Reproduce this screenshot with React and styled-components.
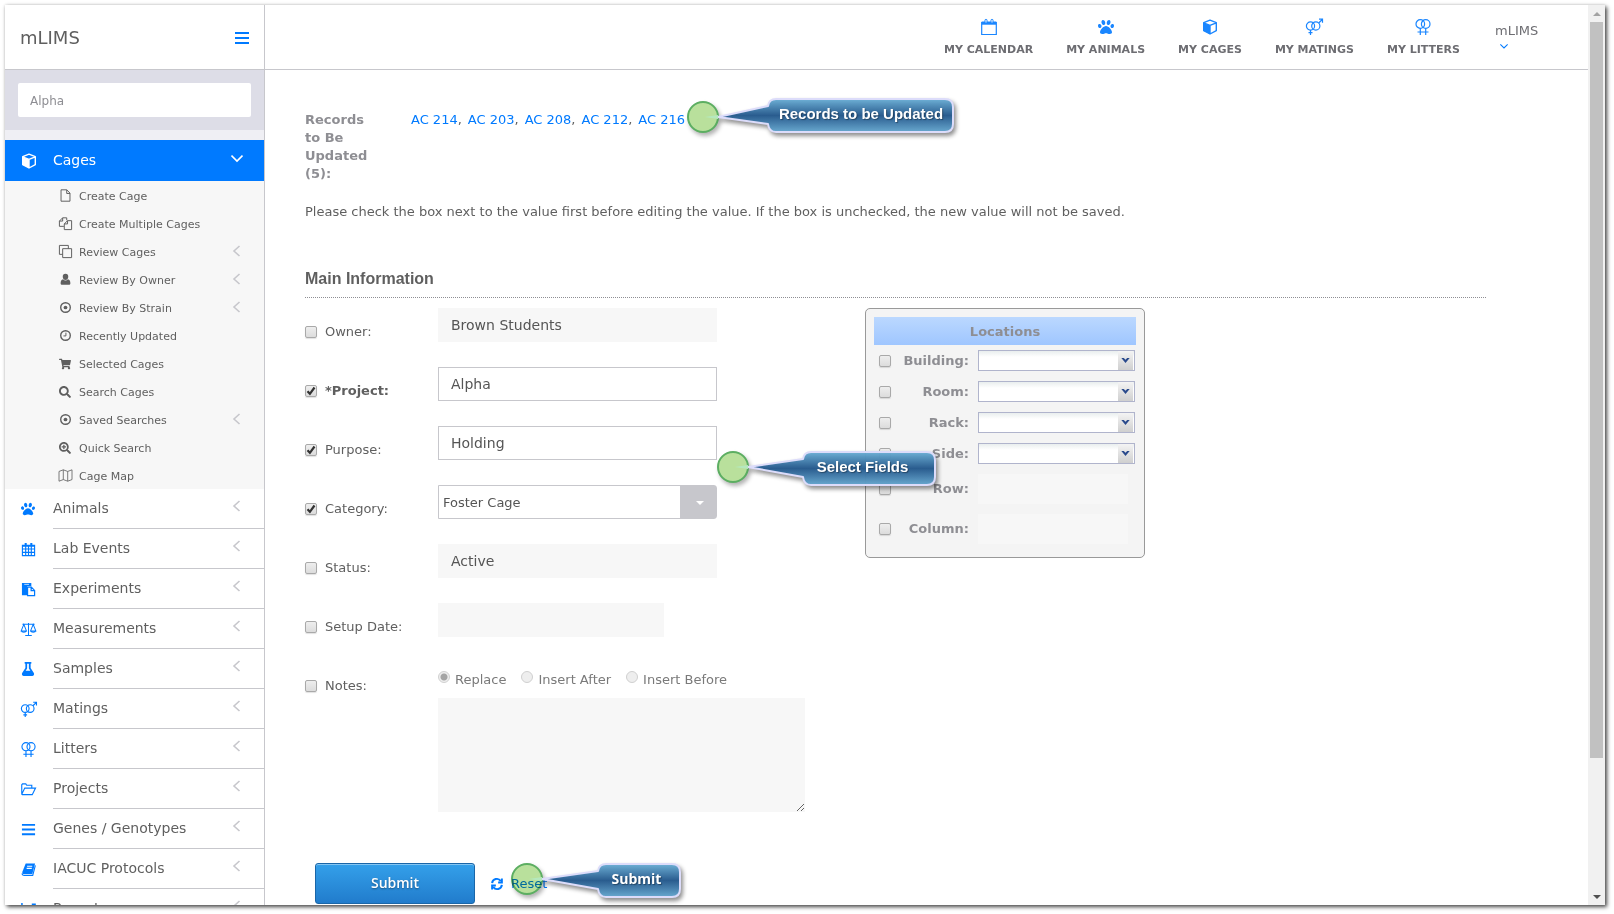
import React from "react";
import styled, { createGlobalStyle, css } from "styled-components";
import { FaPaw, FaShoppingCart, FaSearch, FaSearchPlus, FaFlask } from "react-icons/fa";

const blue = "#007aff";
const line = "#c7c7cc";
const muted = "#8e8e93";
const ink = "#5f5f5f";
const sans = `Verdana, "DejaVu Sans", sans-serif`;

const GlobalStyle = createGlobalStyle`
  *, *::before, *::after { box-sizing: border-box; }
  body { margin: 0; background: #fff; color: ${ink}; font: 13px/18px ${sans}; }
  a { color: ${blue}; text-decoration: none; }
  button, input, select, textarea { font-family: inherit; margin: 0; }
`;

/* ---------- icons ---------- */

const Glyph = styled.svg.attrs({ viewBox: "0 0 16 16", "aria-hidden": true })`
  width: ${(p) => p.$size || 16}px;
  height: ${(p) => p.$size || 16}px;
  flex: none;
  display: block;
  fill: none;
  stroke: currentColor;
  stroke-width: 1.2;
  overflow: visible;
`;

const icons = {
  cube: (
    <>
      <path d="M8 1.200l6.300 2.500v8L8 15 1.700 11.700v-8zM1.700 3.900L8 6.400l6.300-2.500M8 6.400V15" strokeLinejoin="round" strokeWidth="1.400" />
      <path d="M1.700 3.900L8 6.400V15l-6.300-3.300z" fill="currentColor" stroke="none" />
    </>
  ),
  file: <path d="M2.500 1h7l4 4v10h-11zM9.500 1v4.500h4" />,
  files: <path d="M6 11.500H.5V5L4.500 1h5v3M4.500 1v4h-4M6.500 15.500V8.500L10.500 4.500h5v11zM10.500 4.500v4h-4" />,
  clone: <path d="M4.500 11.500H.5v-11h11v4M4.500 4.500h11v11h-11z" />,
  user: <path fill="currentColor" stroke="none" d="M8 1a3.500 3.500 0 0 1 3.400 3.600C11.400 6.700 10 8.500 8 8.500S4.600 6.700 4.600 4.600A3.500 3.500 0 0 1 8 1zM5 7.800c1.800 2 4.200 2 6 0 2 .4 3 2.300 3 4.800 0 1.300-.7 2-1.900 2H3.900C2.700 14.600 2 13.900 2 12.600c0-2.500 1-4.400 3-4.800z" />,
  target: (
    <>
      <circle cx="8" cy="8" r="5.900" strokeWidth="1.700" />
      <circle cx="8" cy="8" r="2.300" fill="currentColor" stroke="none" />
    </>
  ),
  clock: (
    <>
      <circle cx="8" cy="8" r="5.900" strokeWidth="1.700" />
      <path d="M8.500 4.500v4H5.500" />
    </>
  ),
  map: <path strokeWidth="1" d="M0 3l5.300-2 5.400 2L16 1v12l-5.300 2-5.400-2L0 15zM5.300 1v12M10.700 3v12" />,
  calendar: (
    <path d="M1.500 4h13M1.500 3.500v11h13v-11zM1.500 7.500h13M1.500 11h13M5 5v9.500M8 5v9.500M11 5v9.500M2 4.500h12M4.500 1v3M5.500 1v3M10.500 1v3M11.500 1v3" strokeWidth="1.200" />
  ),
  calendarOpen: (
    <>
      <path d="M.7 3.500h14.600v12H.7z" />
      <path d="M.7 2.500h14.600v3.200H.7z" fill="currentColor" stroke="none" />
      <path d="M4 4V1.300q0-1 1-1t1 1V4zM10 4V1.300q0-1 1-1t1 1V4z" fill="#fff" strokeWidth="1" />
    </>
  ),
  paste: (
    <>
      <path d="M1 1h10v3.500H6.500V14H1z" fill="currentColor" stroke="none" />
      <path d="M3.500 2.500h5" stroke="#fff" strokeWidth=".8" />
      <path d="M7 5.500h4l3.500 3.500v5.500H7zM10.800 5.500v3.700h3.700" fill="#fff" strokeWidth="1.300" />
    </>
  ),
  scale: <path d="M8 1v13M4.500 14.500h7M1.500 2.500h13M3 2.500L.2 9.500h5.600zM13 2.500l-2.800 7h5.600zM.2 9.500c.6 2 5 2 5.600 0M10.200 9.500c.6 2 5 2 5.600 0" strokeWidth="1.100" />,
  mating: (
    <>
      <circle cx="4.500" cy="7" r="4.100" />
      <circle cx="9.800" cy="7" r="4.100" />
      <path d="M4.500 11v5M2.500 13.700h4M12.700 4L16.500.3M13 .2h3.500v3.500" />
    </>
  ),
  litter: (
    <>
      <circle cx="5.300" cy="5" r="4.300" />
      <circle cx="10.700" cy="5" r="4.300" />
      <path d="M5.300 9.300V16M10.700 9.300V16M2.500 13h11" />
    </>
  ),
  folder: <path d="M.8 12.500V3l.8-1h3.500l1 1.500H11.500V6M.8 13L4 6.500h11.500L12 13.500H1.500z" />,
  bars: <path d="M1 3h14M1 8h14M1 13h14" strokeWidth="2" />,
  book: (
    <>
      <path d="M5 1.500h10L12 13H3.500C1.800 13 1 12 1.500 10.500z" fill="currentColor" stroke="none" />
      <path d="M6.500 4.500h5.500M6 6.800h5.500" stroke="#fff" />
      <path d="M15.300 3.500l-2.800 10.900H3.500C2 14.400 1 13.500 1.300 12" />
    </>
  ),
  chart: <path d="M1 1v13h15M3 11l4-5 3 3 5-6M11.500 2.500H15v3.500" strokeWidth="1.600" />,
  refresh: (
    <path d="M1.500 6.800A6.300 6.300 0 0 1 13 4M14.500 .8v5.200H9.500M14.500 9.200A6.300 6.300 0 0 1 3 12M1.500 15.200V10h5" strokeWidth="2.600" />
  ),
};

const packaged = { paw: FaPaw, cart: FaShoppingCart, search: FaSearch, zoom: FaSearchPlus, flask: FaFlask };

function Icon({ name, size = 16 }) {
  const Packaged = packaged[name];
  return Packaged ? <Packaged size={size} aria-hidden /> : <Glyph $size={size}>{icons[name]}</Glyph>;
}

const ChevronSvg = styled.svg.attrs({ viewBox: "0 0 12 12", "aria-hidden": true })`
  width: ${(p) => p.$size || 12}px;
  height: ${(p) => p.$size || 12}px;
  flex: none;
  fill: none;
  stroke: currentColor;
  stroke-width: 1.6;
`;

const Chevron = ({ down, size }) => (
  <ChevronSvg $size={size}>
    <path d={down ? "M.5 3.500L6 9l5.500-5.500" : "M8.500 1L3 6l5.500 5"} />
  </ChevronSvg>
);

/* ---------- window ---------- */

const Page = styled.div`
  height: 100vh;
  padding: 5px 9px 9px 5px;
`;

const Window = styled.div`
  display: flex;
  height: 100%;
  overflow: hidden;
  background: #fff;
  box-shadow: 2px 2px 4px rgba(0, 0, 0, 0.7), 0 0 3px rgba(0, 0, 0, 0.15);
`;

const ScrollTrack = styled.div`
  flex: none;
  width: 17px;
  display: flex;
  flex-direction: column;
  align-items: center;
  background: #f1f1f1;
`;

const ScrollArrow = styled.span`
  width: 17px;
  height: 17px;
  display: grid;
  place-items: center;
  &::after {
    content: "";
    border: 4px solid transparent;
    border-top-width: 0;
    border-bottom: 4px solid #a3a3a3;
    ${(p) => p.$down && css`
      border-bottom: 0;
      border-top: 4px solid #505050;
    `}
  }
`;

const ScrollRun = styled.div`
  flex: 1;
  width: 13px;
`;

const ScrollThumb = styled.div`
  height: 85%;
  background: #c1c1c1;
`;

/* ---------- sidebar ---------- */

const Sidebar = styled.aside`
  flex: none;
  width: 260px;
  overflow: hidden;
  border-right: 1px solid ${line};
`;

const Brand = styled.div`
  display: flex;
  align-items: center;
  justify-content: space-between;
  height: 65px;
  padding: 2px 14px 0 15px;
  border-bottom: 1px solid ${line};
  font-size: 18px;
`;

const IconButton = styled.button`
  border: 0;
  padding: 0;
  background: none;
  color: ${blue};
`;

const SearchBox = styled.div`
  padding: 13px;
  background: #dddde7;
`;

const SearchInput = styled.input`
  display: block;
  width: 100%;
  height: 34px;
  padding: 1px 12px 0;
  border: 0;
  border-radius: 2px;
  background: #fff;
  color: ${muted};
  font-size: 12px;
`;

const Menu = styled.nav`
  padding-top: 10px;
  background: linear-gradient(#efeff4 10px, #fff 10px);
`;

const MenuLink = styled.a`
  display: flex;
  padding-left: 16px;
  color: ${(p) => (p.$active ? "#fff" : ink)};
  background: ${(p) => (p.$active ? blue : "none")};
`;

const MenuIcon = styled.span`
  flex: none;
  width: 32px;
  display: flex;
  align-items: center;
  color: ${(p) => (p.$active ? "#fff" : blue)};
`;

const MenuLabel = styled.span`
  flex: 1;
  display: flex;
  align-items: center;
  justify-content: space-between;
  height: ${(p) => (p.$active ? 41 : 40)}px;
  padding: 0 21px 2px 0;
  border-bottom: ${(p) => (p.$active ? 0 : 1)}px solid ${line};
  font-size: 14px;
`;

const MenuArrow = styled.span`
  display: flex;
  padding-bottom: 4px;
  color: ${(p) => (p.$active ? "#fff" : line)};
`;

const SubMenu = styled.div`
  background: #f7f7f7;
`;

const SubLink = styled.a`
  display: flex;
  align-items: center;
  height: 28px;
  padding: 3px 21px 0 53px;
  color: ${ink};
  font-size: 11px;
`;

const SubIcon = styled.span`
  width: 14px;
  margin-right: 7px;
  padding-bottom: 2px;
  display: flex;
  justify-content: center;
  flex: none;
`;

const SubLabel = styled.span`
  flex: 1;
`;

/* ---------- header ---------- */

const Column = styled.div`
  flex: 1;
  min-width: 0;
  display: flex;
  flex-direction: column;
`;

const Header = styled.header`
  flex: none;
  display: flex;
  justify-content: flex-end;
  gap: 33px;
  height: 65px;
  padding: 14px 47px 0 0;
  border-bottom: 1px solid ${line};
`;

const NavLink = styled.a`
  display: flex;
  flex-direction: column;
  align-items: center;
  gap: 6px;
  color: #1a86ff;
  white-space: nowrap;
`;

const NavText = styled.span`
  color: #6d6d72;
  font-size: 11px;
  font-weight: bold;
  line-height: 18px;
`;

const Account = styled.button`
  display: flex;
  flex-direction: column;
  align-items: flex-start;
  gap: 2px;
  width: 48px;
  border: 0;
  padding: 3px 0 0 2px;
  background: none;
  color: #6d6d72;
  font-size: 13px;
  line-height: 18px;
`;

const AccountArrow = styled.span`
  display: flex;
  padding-left: 5px;
  color: ${blue};
`;

/* ---------- content ---------- */

const Content = styled.main`
  position: relative;
  flex: 1;
  min-height: 0;
  overflow: hidden;
  padding: 41px 102px 0 40px;
`;

const Records = styled.section`
  display: flex;
  gap: 36px;
`;

const RecordsTitle = styled.div`
  flex: none;
  width: 70px;
  color: ${muted};
  font-weight: bold;
`;

const RecordList = styled.div`
  display: flex;
  gap: 6px;
`;

const Hint = styled.p`
  margin: 20px 0 0;
`;

const SectionTitle = styled.h2`
  margin: 45px 0 0;
  padding-bottom: 5px;
  border-bottom: 1px dotted ${muted};
  font: bold 16px/26px "Liberation Sans", Arial, sans-serif;
`;

const FormGrid = styled.div`
  display: flex;
  align-items: flex-start;
  padding-top: 10px;
`;

const Fields = styled.div`
  flex: none;
  width: 560px;
`;

const FieldRow = styled.div`
  display: flex;
  align-items: flex-start;
  height: ${(p) => (p.$last ? "auto" : "59px")};
`;

const FieldLabel = styled.label`
  flex: none;
  width: 133px;
  display: flex;
  align-items: center;
  gap: 8px;
  padding-top: 15px;
  font-weight: ${(p) => (p.$bold ? "bold" : "normal")};
`;

const tick = `url("data:image/svg+xml,%3Csvg xmlns='http://www.w3.org/2000/svg' viewBox='0 0 12 12'%3E%3Cpath d='M2.500 6.200l2.400 2.600L9.500 2.500' fill='none' stroke='%23333' stroke-width='2.200'/%3E%3C/svg%3E")`;

const Check = styled.input.attrs({ type: "checkbox" })`
  appearance: none;
  flex: none;
  width: 12px;
  height: 12px;
  border: 1px solid #a9a9a9;
  border-radius: 2px;
  background: linear-gradient(#eee, #dcdcdc);
  box-shadow: 0 1px 1px rgba(0, 0, 0, 0.12);
  &:checked {
    background: ${tick} center / 12px 12px no-repeat, linear-gradient(#eee, #dcdcdc);
  }
`;

const TextField = styled.input`
  width: ${(p) => p.$width || 279}px;
  height: 34px;
  padding: 0 12px;
  border: 1px solid ${line};
  background: #fff;
  color: #555;
  font-size: 14px;
  &:disabled {
    border-color: #f7f7f7;
    background: #f7f7f7;
  }
`;

const SelectWrap = styled.span`
  display: flex;
  width: 279px;
  height: 34px;
  border: 1px solid ${line};
  border-radius: 0 3px 3px 0;
`;

const CategorySelect = styled.select`
  appearance: none;
  flex: 1;
  border: 0;
  padding: 0 4px;
  color: #555;
  font-size: 13px;
  background: linear-gradient(${line}, ${line}) right / 36px 100% no-repeat, #fff;
`;

const Caret = styled.span`
  width: 8px;
  height: 4px;
  margin: 15px 12px 0 -20px;
  border: 4px solid transparent;
  border-top-color: #fff;
  border-bottom: 0;
  pointer-events: none;
`;

const Notes = styled.div`
  padding-top: 8px;
`;

const RadioGroup = styled.div`
  display: flex;
  gap: 15px;
  padding-bottom: 8px;
`;

const RadioLabel = styled.label`
  display: flex;
  gap: 5px;
  color: #7a7a7a;
  line-height: 20px;
`;

const Radio = styled.input.attrs({ type: "radio" })`
  appearance: none;
  width: 12px;
  height: 12px;
  margin-top: 1px;
  border: 1px solid #d0d0d0;
  border-radius: 50%;
  background: #eee;
  &:checked {
    background: radial-gradient(circle, #a5a5a5 3px, #eee 4px);
  }
`;

const NotesArea = styled.textarea`
  display: block;
  width: 367px;
  height: 114px;
  border: 0;
  background: #f7f7f7;
  resize: both;
`;

const Locations = styled.fieldset`
  flex: none;
  width: 280px;
  margin: 0;
  padding: 8px;
  border: 1px solid #999;
  border-radius: 5px;
  background: #f4f4f4;
  color: ${muted};
  font-weight: bold;
`;

const LocationsTitle = styled.div`
  height: 28px;
  padding-top: 1px;
  line-height: 28px;
  text-align: center;
  background: linear-gradient(#bbd8ff, #9fc6ff);
`;

const LocationRow = styled.div`
  display: flex;
  align-items: center;
  height: ${(p) => (p.$tall ? 40 : 31)}px;
  padding-left: 5px;
`;

const LocationLabel = styled.label`
  width: 78px;
  margin-right: 9px;
  text-align: right;
`;

const arrow = `url("data:image/svg+xml,%3Csvg xmlns='http://www.w3.org/2000/svg' viewBox='0 0 10 6'%3E%3Cpath d='M0 0h3l2 2 2-2h3L5 6z' fill='%232a4a8c'/%3E%3C/svg%3E")`;

const LocationSelect = styled.select`
  appearance: none;
  width: 157px;
  height: 21px;
  border: 1px solid #b0b4cc;
  background: ${arrow} right 4px center / 9px 5px no-repeat,
    linear-gradient(#f4f4f4, #cfcfcf) right 1px center / 15px 100% no-repeat,
    linear-gradient(#e9eeee, #fff 6px);
`;

const LocationInput = styled.input`
  width: 150px;
  height: 30px;
  border: 0;
  background: #f7f7f7;
`;

const Actions = styled.div`
  display: flex;
  align-items: center;
  padding: 51px 0 0 10px;
`;

const SubmitButton = styled.button`
  width: 160px;
  height: 41px;
  padding: 0 0 2px;
  border: 1px solid #1a66a8;
  border-radius: 3px;
  background: linear-gradient(#34a0ea, #217ccc);
  box-shadow: inset 0 1px 0 rgba(255, 255, 255, 0.4);
  color: #fff;
  font: 600 14px/20px "Open Sans", sans-serif;
  text-shadow: 0 1px 2px rgba(0, 0, 0, 0.4);
`;

const ResetLink = styled.a`
  display: flex;
  align-items: center;
  gap: 8px;
  margin-left: 16px;
`;

/* ---------- guide callouts ---------- */

const CalloutBox = styled.div`
  position: absolute;
  left: ${(p) => p.$x}px;
  top: ${(p) => p.$y}px;
  width: ${(p) => p.$width}px;
  height: 44px;
  pointer-events: none;
`;

const CalloutDot = styled.span`
  position: absolute;
  left: 1px;
  top: 2px;
  width: 32px;
  height: 32px;
  border: 2px solid #5cae62;
  border-radius: 50%;
  background: #b9e09c;
  box-shadow: 2px 3px 4px rgba(0, 0, 0, 0.3);
  mix-blend-mode: multiply;
`;

const CalloutSvg = styled.svg`
  position: relative;
  display: block;
  width: 100%;
  height: 100%;
  overflow: visible;
`;

const Bubble = styled.g`
  filter: drop-shadow(2px 3px 2px rgba(0, 0, 0, 0.45));
`;

const CalloutText = styled.span`
  position: absolute;
  top: 0;
  right: 0;
  width: ${(p) => p.$width}px;
  padding: ${(p) => (p.$raised ? 5 : 8)}px ${(p) => p.$inset}px 0 0;
  text-align: center;
  color: #fff;
  font: ${(p) => (p.$humanist ? `bold 14px/20px "Open Sans", sans-serif` : `bold 15px/20px "Liberation Sans", Arial, sans-serif`)};
  text-shadow: 1px 1px 1px rgba(0, 0, 0, 0.35);
`;

function Callout({ id, x, y, width, box, raised, inset = 0, humanist, children }) {
  const l = width - box;
  const r = width - 1;
  const t = raised ? 0 : 3;
  const b = t + 33;
  return (
    <CalloutBox $x={x} $y={y} $width={width}>
      <CalloutDot />
      <CalloutSvg>
        <defs>
          <linearGradient id={id} gradientUnits="userSpaceOnUse" x1="0" x2="0" y1={t} y2={b}>
            <stop offset="0" stopColor="#6bafd6" />
            <stop offset=".5" stopColor="#265a8e" />
            <stop offset="1" stopColor="#66a8d0" />
          </linearGradient>
        </defs>
        <Bubble>
          <path
            d={`M32 18L${l} ${t + 7}Q${l + 1} ${t} ${l + 8} ${t}H${r - 8}Q${r} ${t} ${r} ${t + 8}V${b - 8}Q${r} ${b} ${r - 8} ${b}H${l + 8}Q${l + 1} ${b} ${l} ${b - 8}Z`}
            fill={`url(#${id})`}
            fillOpacity=".97"
            stroke="#dcdcfa"
            strokeWidth="2"
            strokeLinejoin="round"
          />
        </Bubble>
        <path d="M19 18L32 16v4z" fill="#b5e8bd" />
      </CalloutSvg>
      <CalloutText $width={box} $raised={raised} $inset={inset} $humanist={humanist}>
        {children}
      </CalloutText>
    </CalloutBox>
  );
}

/* ---------- data ---------- */

const cageLinks = [
  ["file", "Create Cage"],
  ["files", "Create Multiple Cages"],
  ["clone", "Review Cages", true],
  ["user", "Review By Owner", true],
  ["target", "Review By Strain", true],
  ["clock", "Recently Updated"],
  ["cart", "Selected Cages"],
  ["search", "Search Cages"],
  ["target", "Saved Searches", true],
  ["zoom", "Quick Search"],
  ["map", "Cage Map"],
];

const menuLinks = [
  ["paw", "Animals"],
  ["calendar", "Lab Events"],
  ["paste", "Experiments"],
  ["scale", "Measurements"],
  ["flask", "Samples"],
  ["mating", "Matings"],
  ["litter", "Litters"],
  ["folder", "Projects"],
  ["bars", "Genes / Genotypes"],
  ["book", "IACUC Protocols"],
  ["chart", "Reports"],
];

const navLinks = [
  ["calendarOpen", "MY CALENDAR"],
  ["paw", "MY ANIMALS"],
  ["cube", "MY CAGES"],
  ["mating", "MY MATINGS"],
  ["litter", "MY LITTERS"],
];

const records = ["AC 214", "AC 203", "AC 208", "AC 212", "AC 216"];

function Field({ id, label, checked, bold, last, children }) {
  return (
    <FieldRow $last={last}>
      <FieldLabel $bold={bold} htmlFor={`${id}-on`}>
        <Check id={`${id}-on`} defaultChecked={checked} />
        {label}
      </FieldLabel>
      {children}
    </FieldRow>
  );
}

export default function App() {
  return (
    <Page>
      <GlobalStyle />
      <Window>
        <Sidebar>
          <Brand>
            mLIMS
            <IconButton aria-label="Toggle menu">
              <Icon name="bars" />
            </IconButton>
          </Brand>
          <SearchBox>
            <SearchInput aria-label="Search" defaultValue="Alpha" />
          </SearchBox>
          <Menu>
            <MenuLink href="#cages" $active>
              <MenuIcon $active>
                <Icon name="cube" />
              </MenuIcon>
              <MenuLabel $active>
                Cages
                <MenuArrow $active>
                  <Chevron down />
                </MenuArrow>
              </MenuLabel>
            </MenuLink>
            <SubMenu>
              {cageLinks.map(([icon, text, more]) => (
                <SubLink href="#cages" key={text}>
                  <SubIcon>
                    <Icon name={icon} size={packaged[icon] ? 12 : 13} />
                  </SubIcon>
                  <SubLabel>{text}</SubLabel>
                  {more && (
                    <MenuArrow>
                      <Chevron />
                    </MenuArrow>
                  )}
                </SubLink>
              ))}
            </SubMenu>
            {menuLinks.map(([icon, text]) => (
              <MenuLink href="#menu" key={text}>
                <MenuIcon>
                  <Icon name={icon} size={packaged[icon] ? 14 : 15} />
                </MenuIcon>
                <MenuLabel>
                  {text}
                  <MenuArrow>
                    <Chevron />
                  </MenuArrow>
                </MenuLabel>
              </MenuLink>
            ))}
          </Menu>
        </Sidebar>

        <Column>
          <Header>
            {navLinks.map(([icon, text]) => (
              <NavLink href="#nav" key={text}>
                <Icon name={icon} />
                <NavText>{text}</NavText>
              </NavLink>
            ))}
            <Account>
              mLIMS
              <AccountArrow>
                <Chevron down size={8} />
              </AccountArrow>
            </Account>
          </Header>

          <Content>
            <Records>
              <RecordsTitle>Records to Be Updated (5):</RecordsTitle>
              <RecordList>
                {records.map((r, i) => (
                  <span key={r}>
                    <a href="#record">{r}</a>
                    {i < records.length - 1 && ","}
                  </span>
                ))}
              </RecordList>
            </Records>
            <Hint>
              Please check the box next to the value first before editing the value. If the box is unchecked, the new
              value will not be saved.
            </Hint>
            <SectionTitle>Main Information</SectionTitle>

            <FormGrid>
              <Fields>
                <Field id="owner" label="Owner:">
                  <TextField aria-label="Owner" defaultValue="Brown Students" disabled />
                </Field>
                <Field id="project" label="*Project:" checked bold>
                  <TextField aria-label="Project" defaultValue="Alpha" />
                </Field>
                <Field id="purpose" label="Purpose:" checked>
                  <TextField aria-label="Purpose" defaultValue="Holding" />
                </Field>
                <Field id="category" label="Category:" checked>
                  <SelectWrap>
                    <CategorySelect aria-label="Category">
                      <option>Foster Cage</option>
                    </CategorySelect>
                    <Caret />
                  </SelectWrap>
                </Field>
                <Field id="status" label="Status:">
                  <TextField aria-label="Status" defaultValue="Active" disabled />
                </Field>
                <Field id="setup" label="Setup Date:">
                  <TextField aria-label="Setup Date" $width={226} disabled />
                </Field>
                <Field id="notes" label="Notes:" last>
                  <Notes>
                    <RadioGroup>
                      {["Replace", "Insert After", "Insert Before"].map((mode, i) => (
                        <RadioLabel key={mode}>
                          <Radio name="mode" defaultChecked={i === 0} disabled />
                          {mode}
                        </RadioLabel>
                      ))}
                    </RadioGroup>
                    <NotesArea aria-label="Notes" disabled />
                  </Notes>
                </Field>
              </Fields>

              <Locations>
                <LocationsTitle>Locations</LocationsTitle>
                {["Building", "Room", "Rack", "Side", "Row", "Column"].map((name, i) => (
                  <LocationRow key={name} $tall={i > 3}>
                    <Check aria-label={`Edit ${name}`} />
                    <LocationLabel htmlFor={name}>{name}:</LocationLabel>
                    {i > 3 ? <LocationInput id={name} disabled /> : <LocationSelect id={name} />}
                  </LocationRow>
                ))}
              </Locations>
            </FormGrid>

            <Actions>
              <SubmitButton>Submit</SubmitButton>
              <ResetLink href="#reset">
                <Icon name="refresh" size={12} />
                Reset
              </ResetLink>
            </Actions>

            <Callout id="tip-records" x={421} y={29} width={268} box={186} raised>
              Records to be Updated
            </Callout>
            <Callout id="tip-fields" x={451} y={379} width={220} box={133} inset={14}>
              Select Fields
            </Callout>
            <Callout id="tip-submit" x={245} y={791} width={171} box={83} inset={6} humanist>
              Submit
            </Callout>
          </Content>
        </Column>

        <ScrollTrack aria-hidden>
          <ScrollArrow />
          <ScrollRun>
            <ScrollThumb />
          </ScrollRun>
          <ScrollArrow $down />
        </ScrollTrack>
      </Window>
    </Page>
  );
}
